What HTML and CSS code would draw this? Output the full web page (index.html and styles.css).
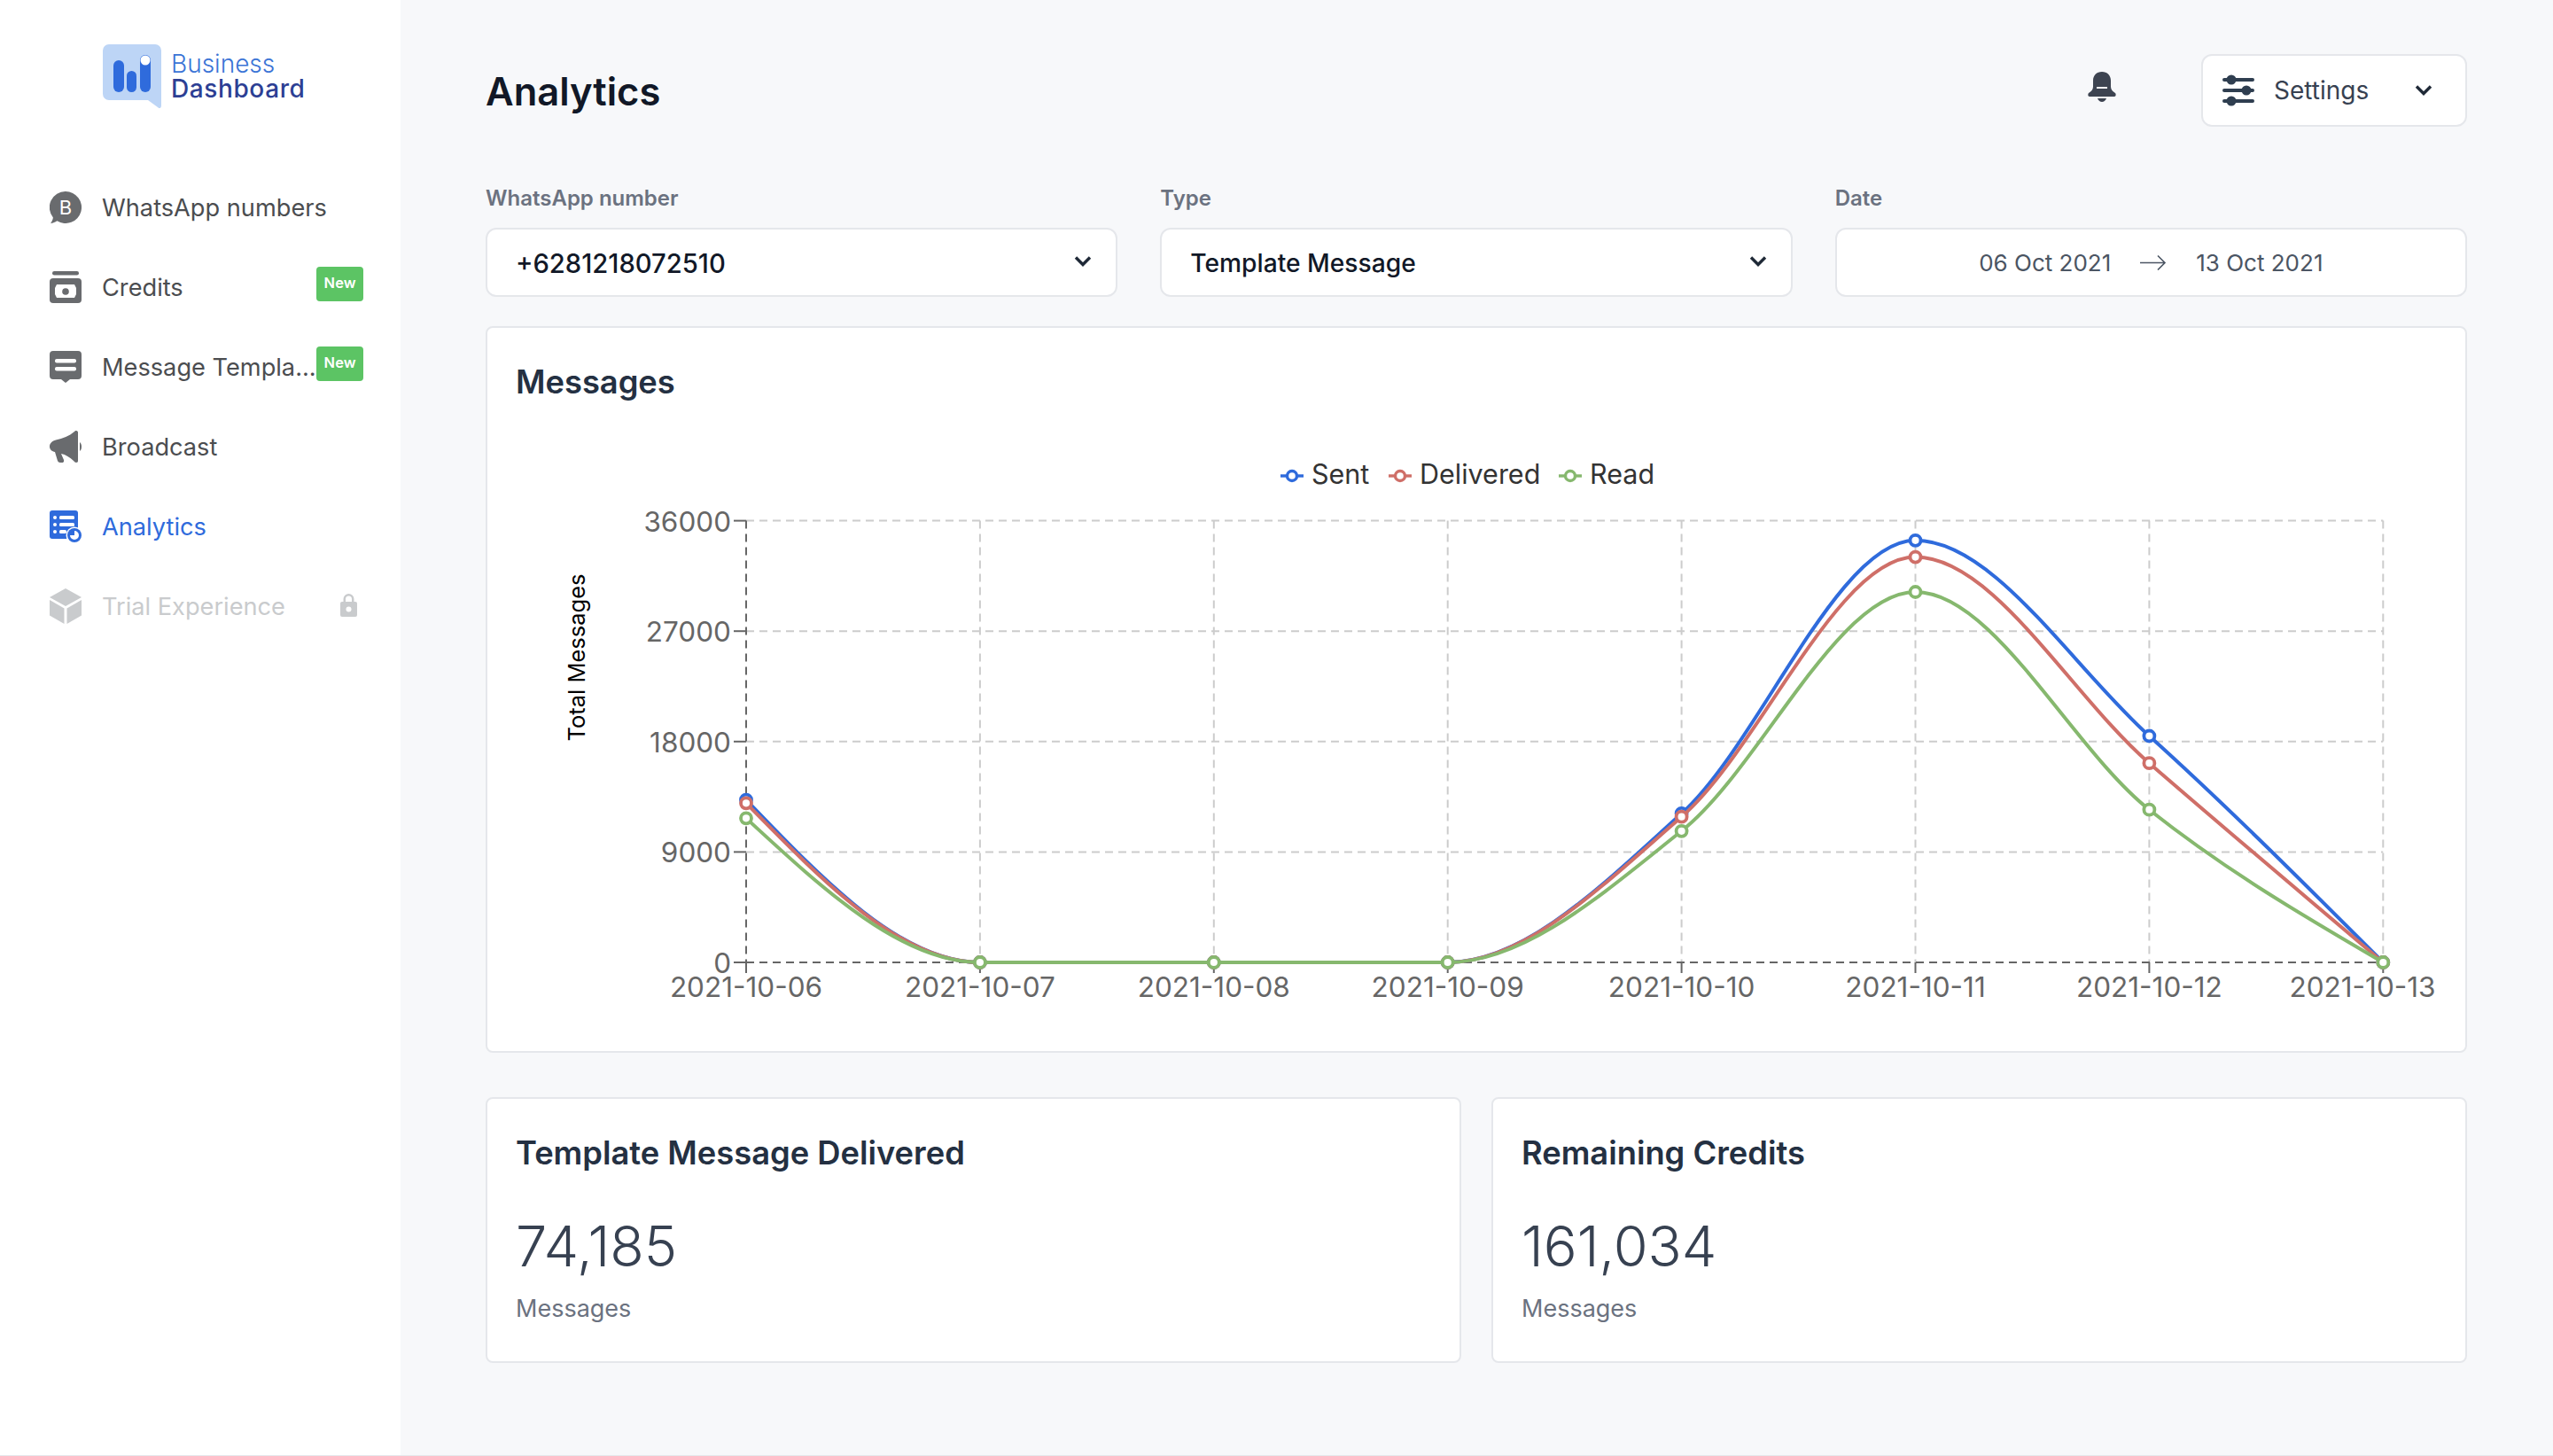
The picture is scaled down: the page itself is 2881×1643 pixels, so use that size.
FILE: index.html
```html
<!DOCTYPE html>
<html>
<head>
    <title>Analytics</title>
    <link rel="stylesheet" href="styles.css">
</head>
<body>
    <div class="app">
        <aside class="sidebar">
            <div class="logo">
                <svg class="logo-mark" viewBox="0 0 66 72" width="66" height="72">
                    <path d="M7 0h52a7 7 0 0 1 7 7v62c0 3-2 4-4 2l-11-8H7a7 7 0 0 1-7-7V7a7 7 0 0 1 7-7z" fill="#bdd5f6"/>
                    <rect x="12" y="18" width="12" height="36" rx="6" fill="#2f6bdc"/>
                    <rect x="27" y="30" width="11" height="24" rx="5.5" fill="#2f6bdc"/>
                    <rect x="42" y="12" width="12" height="42" rx="6" fill="#2f6bdc"/>
                    <circle cx="48" cy="18" r="5.5" fill="#fff"/>
                </svg>
                <div class="logo-text">
                    <span class="logo-top">Business</span>
                    <span class="logo-bottom">Dashboard</span>
                </div>
            </div>

            <nav class="nav">
                <a class="nav-item">
                    <svg class="nav-icon" viewBox="0 0 36 36">
                        <path d="M18 0a18 18 0 1 1-9.6 33.2C6.500 34.600 3.800 35.700 1 36c1.500-1.800 2.500-4 2.900-6.600A18 18 0 0 1 18 0z" fill="currentColor"/>
                        <text x="18" y="25.500" class="icon-letter">B</text>
                    </svg>
                    <span class="nav-label">WhatsApp numbers</span>
                </a>
                <a class="nav-item">
                    <svg class="nav-icon" viewBox="0 0 36 36">
                        <rect x="3" y="0" width="30" height="4.500" rx="2.200" fill="currentColor"/>
                        <path d="M4 8h28a4 4 0 0 1 4 4v20a4 4 0 0 1-4 4H4a4 4 0 0 1-4-4V12a4 4 0 0 1 4-4z" fill="currentColor"/>
                        <path d="M8 15h20l2 4v7l-2 4H8l-2-4v-7z" fill="#fff"/>
                        <circle cx="18" cy="23" r="3.800" fill="currentColor"/>
                    </svg>
                    <span class="nav-label">Credits</span>
                    <span class="badge">New</span>
                </a>
                <a class="nav-item">
                    <svg class="nav-icon" viewBox="0 0 36 36">
                        <path d="M4 0h28a4 4 0 0 1 4 4v24a4 4 0 0 1-4 4h-9l-5 4-5-4H4a4 4 0 0 1-4-4V4a4 4 0 0 1 4-4z" fill="currentColor"/>
                        <rect x="6" y="9" width="24" height="4.500" rx="2" fill="#fff"/>
                        <rect x="6" y="18" width="24" height="4.500" rx="2" fill="#fff"/>
                    </svg>
                    <span class="nav-label">Message Templa...</span>
                    <span class="badge">New</span>
                </a>
                <a class="nav-item">
                    <svg class="nav-icon" viewBox="0 0 36 36">
                        <path d="M30 0c1.500 0 2 1 2 2v32c0 1-.5 2-2 2-1 0-2-1-3-2-4-4-9-7-14-8l3 7c.5 2-.5 3-2 3h-2c-1.500 0-2.500-1-3-2L6 24c-3-.5-6-2.500-6-6 0-4 3-6.500 7-7.500 8-1.500 15-4.500 21-9.500.5-.5 1-1 2-1z" fill="currentColor"/>
                        <path d="M34 13c1.500 1 2 3 2 5s-.5 4-2 5z" fill="currentColor"/>
                    </svg>
                    <span class="nav-label">Broadcast</span>
                </a>
                <a class="nav-item is-active">
                    <svg class="nav-icon" viewBox="0 0 36 36">
                        <path d="M3 0h26a3 3 0 0 1 3 3v29H3a3 3 0 0 1-3-3V3a3 3 0 0 1 3-3z" fill="currentColor"/>
                        <circle cx="6" cy="8" r="2" fill="#fff"/>
                        <rect x="11" y="6" width="17" height="4" rx="1.500" fill="#fff"/>
                        <circle cx="6" cy="16" r="2" fill="#fff"/>
                        <rect x="11" y="14" width="17" height="4" rx="1.500" fill="#fff"/>
                        <circle cx="6" cy="24" r="2" fill="#fff"/>
                        <rect x="11" y="22" width="8" height="4" rx="1.500" fill="#fff"/>
                        <circle cx="28" cy="28" r="9.500" fill="#fff"/>
                        <circle cx="28" cy="28" r="8" fill="currentColor"/>
                        <path d="M28 23a5 5 0 1 1-5 5h5z" fill="#fff"/>
                    </svg>
                    <span class="nav-label">Analytics</span>
                </a>
                <a class="nav-item is-locked">
                    <svg class="nav-icon cube" viewBox="0 0 36 40">
                        <path d="M18 0l18 10-18 10L0 10z" fill="currentColor"/>
                        <path d="M0 13l16.500 9.500V40L0 30.500z" fill="currentColor"/>
                        <path d="M36 13L19.500 22.500V40L36 30.500z" fill="currentColor"/>
                    </svg>
                    <span class="nav-label">Trial Experience</span>
                    <svg class="lock-icon" viewBox="0 0 19 27" width="19" height="27">
                        <path d="M3.500 11V7a6 6 0 0 1 12 0v4h-2.500V7a3.500 3.500 0 0 0-7 0v4z" fill="currentColor"/>
                        <path d="M2 10h15a2 2 0 0 1 2 2v13a2 2 0 0 1-2 2H2a2 2 0 0 1-2-2V12a2 2 0 0 1 2-2z" fill="currentColor"/>
                        <circle cx="9.500" cy="18.500" r="3" fill="#fff"/>
                    </svg>
                </a>
            </nav>
        </aside>

        <main class="main">
            <header class="page-header">
                <h1>Analytics</h1>
                <svg class="bell" viewBox="0 0 32 34" width="32" height="34">
                    <path d="M16 0c6 0 10 4 10 10v7c0 3 2 5 5 7 1 1 1 4-1 4H2c-2 0-2-3-1-4 3-2 5-4 5-7v-7C6 4 10 0 16 0z" fill="#3d4451"/>
                    <rect x="10" y="17" width="12" height="2" fill="#f7f8fa"/>
                    <path d="M11 30h10c-1 2.500-3 4-5 4s-4-1.500-5-4z" fill="#3d4451"/>
                </svg>
                <button class="settings-btn">
                    <svg viewBox="0 0 36 36" width="36" height="36">
                        <rect x="0" y="4" width="36" height="4" rx="2" fill="#2f3e50"/>
                        <circle cx="10" cy="6" r="5.500" fill="#2f3e50"/>
                        <rect x="0" y="16" width="36" height="4" rx="2" fill="#2f3e50"/>
                        <circle cx="27" cy="18" r="5.500" fill="#2f3e50"/>
                        <rect x="0" y="28" width="36" height="4" rx="2" fill="#2f3e50"/>
                        <circle cx="10" cy="30" r="5.500" fill="#2f3e50"/>
                    </svg>
                    <span>Settings</span>
                    <svg class="chevron" viewBox="0 0 20 14" width="20" height="14">
                        <path d="M2 2.500l8 8 8-8" fill="none" stroke="#1f2937" stroke-width="3.400"/>
                    </svg>
                </button>
            </header>

            <section class="filters">
                <div class="filter">
                    <label>WhatsApp number</label>
                    <div class="select">
                        <span class="phone">+6281218072510</span>
                        <svg viewBox="0 0 20 14" width="20" height="14">
                            <path d="M2 2.500l8 8 8-8" fill="none" stroke="#1f2937" stroke-width="3.400"/>
                        </svg>
                    </div>
                </div>
                <div class="filter">
                    <label>Type</label>
                    <div class="select">
                        <span>Template Message</span>
                        <svg viewBox="0 0 20 14" width="20" height="14">
                            <path d="M2 2.500l8 8 8-8" fill="none" stroke="#1f2937" stroke-width="3.400"/>
                        </svg>
                    </div>
                </div>
                <div class="filter">
                    <label>Date</label>
                    <div class="date-range">
                        <span>06 Oct 2021</span>
                        <svg viewBox="0 0 30 18" width="30" height="18">
                            <path d="M0 9.500h28M20 1.500l8 8-8 8" fill="none" stroke="#4b5563" stroke-width="1.600"/>
                        </svg>
                        <span>13 Oct 2021</span>
                    </div>
                </div>
            </section>

            <section class="card chart-card">
                <h2>Messages</h2>
                <svg id="chart" class="chart" viewBox="550 470 2232 716"></svg>
            </section>

            <section class="stats">
                <div class="card stat-card">
                    <h2>Template Message Delivered</h2>
                    <div class="stat-value">74,185</div>
                    <div class="stat-unit">Messages</div>
                </div>
                <div class="card stat-card">
                    <h2>Remaining Credits</h2>
                    <div class="stat-value">161,034</div>
                    <div class="stat-unit">Messages</div>
                </div>
            </section>
        </main>
    </div>

    <script src="chart.js"></script>
</body>
</html>
```

FILE: styles.css
```css
* { box-sizing: border-box; }

body {
    margin: 0;
    background: #fff;
    font-family: Inter, "Liberation Sans", sans-serif;
    color: #1f2937;
}

.app {
    display: flex;
    height: 1643px;
    background: #f7f8fa;
    border-bottom: 1px solid #e5e7eb;
}

/* sidebar */
.sidebar {
    flex: 0 0 452px;
    min-width: 0;
    background: #fff;
    padding: 50px 42px 0 56px;
}

.logo {
    display: flex;
    gap: 11px;
    margin-left: 60px;
    height: 139px;
}

.logo-text {
    display: flex;
    flex-direction: column;
    padding-top: 8px;
    font-size: 28px;
    line-height: 28px;
}

.logo-top { color: #3b74d6; font-weight: 300; }
.logo-bottom { color: #2d3f94; font-weight: 500; letter-spacing: 0.6px; }

.nav-item {
    display: flex;
    align-items: center;
    height: 90px;
    color: #4b4d50;
    font-size: 27.2px;
}

.nav-icon {
    flex: 0 0 36px;
    width: 36px;
    height: 36px;
    margin-right: 23px;
    color: #696b6e;
}

.nav-icon.cube { height: 40px; }

.icon-letter {
    font-size: 22px;
    fill: #fff;
    text-anchor: middle;
}

.nav-label {
    flex: 1;
    white-space: nowrap;
}

.badge {
    flex: none;
    margin-bottom: 8px;
    padding: 0 8.5px;
    height: 39px;
    line-height: 37px;
    background: #5cc464;
    border-radius: 4px;
    color: #fff;
    font-size: 16.5px;
    font-weight: 600;
}

.nav-item.is-active,
.nav-item.is-active .nav-icon { color: #2f6bdc; }

.nav-item.is-locked,
.nav-item.is-locked .nav-icon { color: #c9cbcd; }

.lock-icon { margin: 0 7px 4px 0; }

/* main */
.main {
    flex: 1;
    min-width: 0;
    padding: 61px 97px 0 96px;
}

.page-header {
    display: flex;
    align-items: center;
    height: 82px;
    margin-bottom: 63px;
}

h1 {
    flex: 1;
    margin: 2px 0 0;
    font-size: 43.5px;
    font-weight: 600;
    color: #111827;
}

.bell { margin: 0 96px 8px 0; }

.settings-btn {
    display: flex;
    align-items: center;
    width: 300px;
    height: 82px;
    padding: 0 37px 0 22px;
    background: #fff;
    border: 2px solid #e5e7eb;
    border-radius: 12px;
    font: inherit;
    font-size: 28px;
    color: #374151;
}

.settings-btn span {
    flex: 1;
    margin-left: 22px;
    text-align: left;
}

.filters {
    display: flex;
    gap: 48px;
    margin-bottom: 33px;
}

.filter { flex: 1; }

.filter label {
    display: block;
    height: 34px;
    line-height: 36px;
    margin-bottom: 17px;
    font-size: 24px;
    font-weight: 600;
    color: #6b7280;
}

.select, .date-range {
    display: flex;
    align-items: center;
    height: 78px;
    background: #fff;
    border: 2px solid #e5e7eb;
    border-radius: 12px;
}

.select {
    justify-content: space-between;
    padding: 2px 27px 0 32px;
    font-size: 28.2px;
    font-weight: 500;
    color: #111827;
}

.select .phone { font-size: 29.2px; }

.select svg { margin-bottom: 5px; }

.date-range {
    justify-content: center;
    gap: 33px;
    font-size: 26px;
    color: #4b5563;
}

.card {
    background: #fff;
    border: 2px solid #e5e7eb;
    border-radius: 8px;
}

.card h2 {
    margin: 0;
    font-size: 36.3px;
    font-weight: 600;
    color: #243042;
}

.chart-card h2 {
    height: 100px;
    padding: 36px 0 0 32px;
    line-height: 50px;
}

.chart {
    display: block;
    width: 2232px;
    height: 716px;
}

.chart text {
    font-family: Inter, "Liberation Sans", sans-serif;
    font-size: 31.5px;
    fill: #666;
}

.chart .legend-text {
    font-size: 30.5px;
    fill: #333;
}

.chart .axis-name {
    font-size: 25.5px;
    fill: #000;
}

.stats {
    display: flex;
    gap: 34px;
    margin-top: 50px;
}

.stat-card {
    flex: 1;
    height: 300px;
    padding: 36px 32px 0;
}

.stat-card h2 { line-height: 50px; }

.stat-value {
    margin-top: 42px;
    font-size: 63px;
    font-weight: 300;
    line-height: 76px;
    color: #374151;
}

.stat-unit {
    margin-top: 15px;
    font-size: 27px;
    line-height: 36px;
    color: #6b7280;
}
```

FILE: chart.js
```js
// page coordinates of the plot
var left = 842, right = 2689.3, bottom = 1086, top_ = 587.6;
var days = ['2021-10-06', '2021-10-07', '2021-10-08', '2021-10-09', '2021-10-10', '2021-10-11', '2021-10-12', '2021-10-13'];
var step = (right - left) / 7;

// y pixel of each day
var series = [
    { name: 'Sent', color: '#2f6bdc', ys: [902.7, 1086, 1086, 1086, 917.9, 609.8, 830.5, 1086] },
    { name: 'Delivered', color: '#cf6f68', ys: [906.3, 1086, 1086, 1086, 921.7, 628.6, 861.2, 1086] },
    { name: 'Read', color: '#86b86e', ys: [923.3, 1086, 1086, 1086, 937.8, 668, 913.7, 1086] }
];

// monotone cubic through the points, same x step everywhere
function monotonePath(pts) {
    var n = pts.length;
    var slopes = [];
    for (var i = 0; i < n - 1; i++) {
        slopes.push((pts[i + 1][1] - pts[i][1]) / step);
    }
    var t = [];
    for (i = 1; i < n - 1; i++) {
        var s0 = slopes[i - 1], s1 = slopes[i];
        t[i] = (Math.sign(s0) + Math.sign(s1)) * Math.min(Math.abs(s0), Math.abs(s1), 0.25 * Math.abs(s0 + s1));
    }
    t[0] = (3 * slopes[0] - t[1]) / 2;
    t[n - 1] = (3 * slopes[n - 2] - t[n - 2]) / 2;

    var dx = step / 3;
    var d = 'M' + pts[0][0] + ' ' + pts[0][1];
    for (i = 0; i < n - 1; i++) {
        d += 'C' + (pts[i][0] + dx).toFixed(1) + ' ' + (pts[i][1] + dx * t[i]).toFixed(1) + ' ' +
            (pts[i + 1][0] - dx).toFixed(1) + ' ' + (pts[i + 1][1] - dx * t[i + 1]).toFixed(1) + ' ' +
            pts[i + 1][0] + ' ' + pts[i + 1][1];
    }
    return d;
}

var html = '';
var dash = 'stroke-dasharray="9 6"';

// grid
[0, 1, 2, 3, 4].forEach(function (i) {
    var y = bottom - i * (bottom - top_) / 4;
    var value = String(i * 9000);
    if (i > 0) {
        html += '<line x1="' + left + '" x2="' + right + '" y1="' + y + '" y2="' + y + '" stroke="#ccc" stroke-width="2" ' + dash + '/>';
    }
    html += '<line x1="' + (left - 14) + '" x2="' + left + '" y1="' + y + '" y2="' + y + '" stroke="#666" stroke-width="2"/>';
    html += '<text x="825" y="' + (y + 12) + '" text-anchor="end">' + value + '</text>';
});

days.forEach(function (day, i) {
    var x = left + i * step;
    if (i > 0) {
        html += '<line x1="' + x + '" x2="' + x + '" y1="' + top_ + '" y2="' + bottom + '" stroke="#ccc" stroke-width="2" ' + dash + '/>';
    }
    html += '<line x1="' + x + '" x2="' + x + '" y1="' + bottom + '" y2="1098" stroke="#666" stroke-width="2"/>';
    html += '<text x="' + (i === 7 ? 2666 : x) + '" y="1125" text-anchor="middle">' + day + '</text>';
});

// axes
html += '<line x1="' + left + '" x2="' + left + '" y1="' + top_ + '" y2="' + bottom + '" stroke="#666" stroke-width="2" ' + dash + '/>';
html += '<line x1="' + left + '" x2="' + right + '" y1="' + bottom + '" y2="' + bottom + '" stroke="#666" stroke-width="2" ' + dash + '/>';
html += '<text class="axis-name" transform="translate(660 742) rotate(-90)" text-anchor="middle">Total Messages</text>';

// lines and dots
series.forEach(function (s) {
    var pts = s.ys.map(function (y, i) { return [+(left + i * step).toFixed(1), y]; });
    html += '<path d="' + monotonePath(pts) + '" fill="none" stroke="' + s.color + '" stroke-width="4"/>';
    pts.forEach(function (p) {
        html += '<circle cx="' + p[0] + '" cy="' + p[1] + '" r="6" fill="#fff" stroke="' + s.color + '" stroke-width="3.8"/>';
    });
});

// legend
var legendX = { Sent: 1445, Delivered: 1567, Read: 1759 };
series.forEach(function (s) {
    var x = legendX[s.name];
    html += '<line x1="' + x + '" x2="' + (x + 26) + '" y1="537" y2="537" stroke="' + s.color + '" stroke-width="3.4"/>';
    html += '<circle cx="' + (x + 13) + '" cy="537" r="5.5" fill="#fff" stroke="' + s.color + '" stroke-width="3.4"/>';
    html += '<text class="legend-text" x="' + (x + 35) + '" y="546">' + s.name + '</text>';
});

document.getElementById('chart').innerHTML = html;
```
